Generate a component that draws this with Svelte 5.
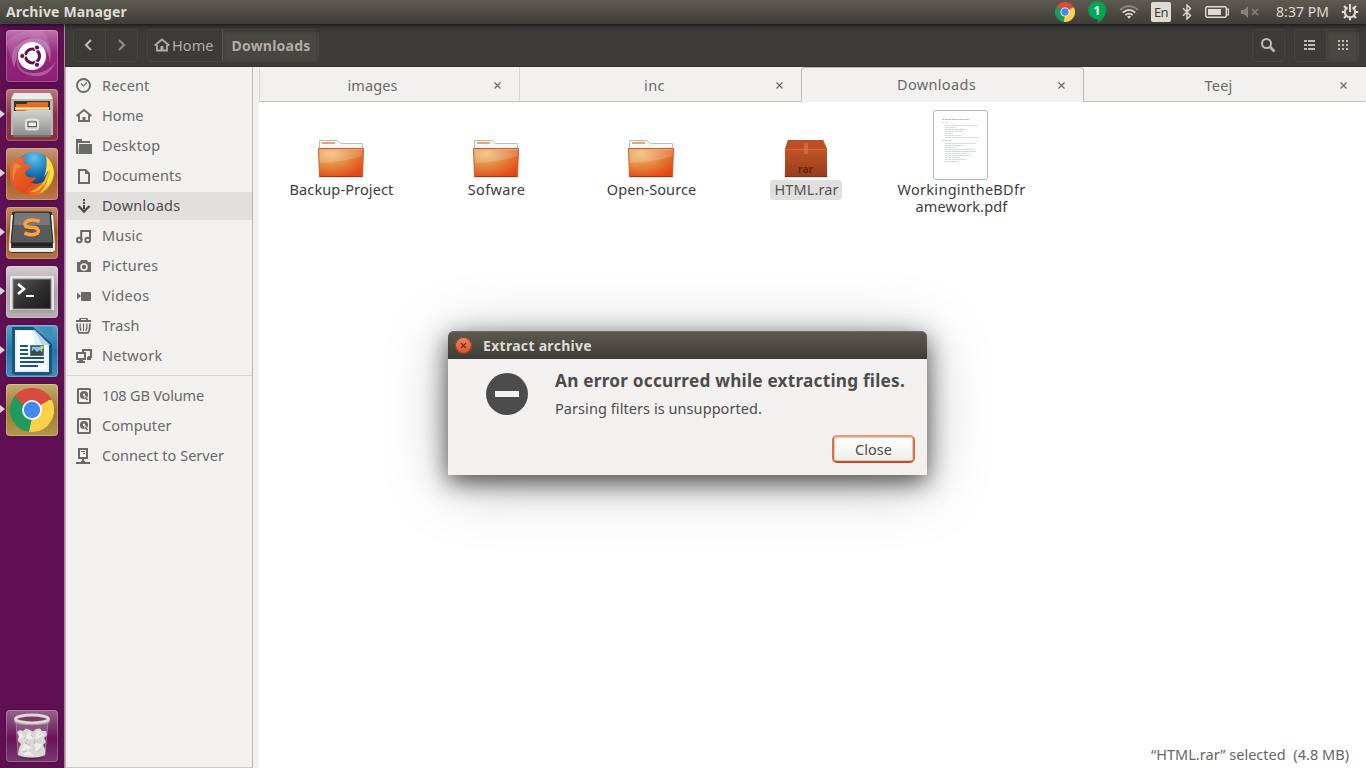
<script>
  // Spreads the letters of a label so that it takes up the given width.
  function track(node, width) {
    const range = document.createRange();
    range.selectNodeContents(node);
    const natural = range.getBoundingClientRect().width;
    const gap = (width - natural) / node.textContent.length;
    node.style.letterSpacing = gap.toFixed(3) + 'px';
  }

  const places = [
    ['recent', 'Recent', 47.5],
    ['home', 'Home', 41.5],
    ['desktop', 'Desktop', 58.5],
    ['documents', 'Documents', 79.5],
    ['downloads', 'Downloads', 78.5],
    ['music', 'Music', 40.5],
    ['pictures', 'Pictures', 56.5],
    ['videos', 'Videos', 47.5],
    ['trash', 'Trash', 37.5],
    ['network', 'Network', 60.5]
  ];
  const devices = [
    ['disk', '108 GB Volume', 102],
    ['disk', 'Computer', 69.5],
    ['server', 'Connect to Server', 122]
  ];
  const tabs = [
    { name: 'images', width: 50 },
    { name: 'inc', width: 21 },
    { name: 'Downloads', width: 79, active: true },
    { name: 'Teej', width: 28 }
  ];
  const files = [
    { kind: 'folder', lines: [['Backup-Project', 104]] },
    { kind: 'folder', lines: [['Sofware', 57.5]] },
    { kind: 'folder', lines: [['Open-Source', 89.5]] },
    { kind: 'rar', lines: [['HTML.rar', 64]], selected: true },
    { kind: 'pdf', lines: [['WorkingintheBDfr', 128], ['amework.pdf', 92]] }
  ];
  const apps = ['dash', 'cabinet', 'firefox', 'sublime', 'terminal', 'writer', 'chrome'];
  const pdfLines = [
    [9, 9, 27, 2], [9, 12, 6, 1], [12, 15, 32, 1], [12, 17, 11, 1], [12, 19, 20, 1], [12, 21, 17, 1], [12, 23, 8, 1],
    [12, 25, 17, 1], [12, 27, 35, 1], [9, 30, 10, 1], [12, 33, 31, 1], [12, 35, 18, 1], [12, 37, 11, 1],
    [12, 39, 29, 1], [12, 41, 31, 1], [12, 43, 22, 1], [12, 45, 26, 1], [12, 47, 15, 1], [12, 49, 20, 1], [12, 51, 14, 1]
  ];
</script>

{#snippet chromeLogo(size)}
  <svg width={size} height={size} viewBox="0 0 44 44">
    <path d="M22 22 2.9 11 A22 22 0 0 1 41.1 11Z" fill="#d84b3e" />
    <path d="M22 22 41.1 11 A22 22 0 0 1 22 44Z" fill="#fdd04a" />
    <path d="M22 22 22 44 A22 22 0 0 1 2.9 11Z" fill="#1e9a5d" />
    <path d="M22 12H41.5L40 9 22 8Z" fill="#d84b3e" />
    <path d="M30.7 27 22 44 19 43.8 22 30Z" fill="#fdd04a" />
    <path d="M13.3 27 3 11 5 8 14 18Z" fill="#1e9a5d" />
    <circle cx="22" cy="22" r="10" fill="#fff" />
    <circle cx="22" cy="22" r="8.2" fill="#4688f1" />
  </svg>
{/snippet}

{#snippet placeIcon(kind)}
  <svg class="place-icon" width="16" height="16" viewBox="0 0 16 16">
    {#if kind === 'recent'}
      <circle cx="7.5" cy="7.5" r="6.5" fill="none" stroke="currentColor" stroke-width="1.9" />
      <path d="M5 5.5 7.5 8 11 4.5" fill="none" stroke="currentColor" stroke-width="1.2" />
    {:else if kind === 'home'}
      <path d="M.5 8 8 2 15.500 8M3 7V13H13V7" fill="none" stroke="currentColor" stroke-width="1.9" />
      <path d="M6.500 9H9.500V13H6.500Z" fill="currentColor" />
    {:else if kind === 'desktop'}
      <path d="M0 1H6V3H14V5H2V16H0ZM3 6H16V16H2.500Z" fill="currentColor" />
    {:else if kind === 'documents'}
      <path d="M3 2H9.500L13 5.500V15H3Z" fill="none" stroke="currentColor" stroke-width="2" />
      <path d="M9 2V6H13Z" fill="currentColor" />
    {:else if kind === 'downloads'}
      <path d="M7 1H9V3H7ZM7 4H9V6H7ZM7 7H9V11H7Z" fill="currentColor" />
      <path d="M2.500 8 8 13.500 13.500 8" fill="none" stroke="currentColor" stroke-width="2.300" />
    {:else if kind === 'music'}
      <path d="M5.200 12V3H14V11" fill="none" stroke="currentColor" stroke-width="2" />
      <circle cx="3.300" cy="12" r="2.300" fill="none" stroke="currentColor" stroke-width="2" />
      <circle cx="11.700" cy="12" r="2.300" fill="none" stroke="currentColor" stroke-width="2" />
    {:else if kind === 'pictures'}
      <path d="M1 4H4L5 2H11L12 4H15V14H1Z" fill="currentColor" />
      <circle cx="8" cy="9" r="3" fill="none" stroke="#f2f1f0" stroke-width="1.600" />
    {:else if kind === 'videos'}
      <path d="M1 4.500 5 8 1 11.500ZM5.500 4H14Q15 4 15 5V12Q15 13 14 13H5.500Q5 13 5 12V5Q5 4 5.500 4Z" fill="currentColor" />
    {:else if kind === 'trash'}
      <path d="M0 2H3L3.500 0H11.500L12 2H15V4H0Z" fill="currentColor" />
      <path d="M5 1.500H10" stroke="#f2f1f0" />
      <path d="M1.200 5.500Q.8 12 3 14.900H12Q14.200 12 13.800 5.500" fill="none" stroke="currentColor" stroke-width="1.800" />
      <path d="M4.200 5.500Q3.600 10 5 13M7.500 5.500V13M10.800 5.500Q11.400 10 10 13" fill="none" stroke="currentColor" stroke-width="1.200" />
    {:else if kind === 'network'}
      <path d="M7 4V2H15V9H12M1 5H9V11H1Z" fill="none" stroke="currentColor" stroke-width="2" />
      <path d="M3 11H7V13H9V15H1V13H3ZM11 9H14V10H15V12H11Z" fill="currentColor" />
    {:else if kind === 'disk'}
      <rect x="2" y="1" width="12" height="14" rx=".8" fill="none" stroke="currentColor" stroke-width="2" />
      <circle cx="8" cy="7" r="4.100" fill="currentColor" />
      <path d="M7.500 9 9.500 7.500 13 12 11 13Z" fill="#f2f1f0" />
      <path d="M9 9 11.500 12" stroke="currentColor" stroke-width="1.600" />
      <circle cx="8" cy="6.800" r="1.200" fill="#f2f1f0" />
    {:else if kind === 'server'}
      <path d="M3 1H11V10H3Z" fill="none" stroke="currentColor" stroke-width="2" />
      <path d="M5 3H9V4H5ZM7 5H9V6H7ZM6 10H8V14H6ZM0 14H14V16H0ZM5 13H9V14H5Z" fill="currentColor" />
    {/if}
  </svg>
{/snippet}

<div class="screen">
  <header class="panel">
    <span class="title"><span use:track={121}>Archive Manager</span></span>
    <div class="indicators">
      <span class="ind chrome-tray">{@render chromeLogo(20)}</span>
      <span class="ind hangouts">
        <svg width="20" height="22" viewBox="0 0 20 22"><path d="M10 0A9.200 9.200 0 0 1 19.200 9.300C19.200 15 15 19 11 22V18.400A9.200 9.200 0 1 1 10 0Z" fill="#00a558" /></svg>
        <b>1</b>
      </span>
      <svg class="ind wifi" width="20" height="14" viewBox="0 0 20 14" fill="none" stroke-width="1.700">
        <path d="M1 4.800Q10-2.500 19 4.800" stroke="#8b8981" />
        <path d="M3.700 7.600Q10 2 16.300 7.600" stroke="#dfdbd2" />
        <path d="M6.300 10.200Q10 7 13.700 10.200" stroke="#dfdbd2" />
        <path d="M8 11.500Q10 10 12 11.500L10 13.800Z" fill="#dfdbd2" stroke="none" />
      </svg>
      <span class="ind keyboard"><span use:track={14}>En</span></span>
      <svg class="ind bluetooth" width="10" height="16" viewBox="0 0 10 16"><path d="M1 4.300 8.500 11.500 5 15V1L8.500 4.500 1 11.700" fill="none" stroke="#dfdbd2" stroke-width="1.400" /></svg>
      <svg class="ind battery" width="25" height="12" viewBox="0 0 25 12">
        <rect x=".7" y=".7" width="20.600" height="10.600" rx="1.500" fill="none" stroke="#dfdbd2" stroke-width="1.400" />
        <path d="M3 3H16V9H3Z" fill="#dfdbd2" /><path d="M22 3H23.400V9H22" fill="none" stroke="#dfdbd2" stroke-width="1.200" />
      </svg>
      <svg class="ind volume" width="18" height="12" viewBox="0 0 18 12"><path d="M0 4H3L7 0V12L3 8H0Z" fill="#85837b" /><path d="M11 3 17 9M17 3 11 9" stroke="#85837b" stroke-width="1.600" /></svg>
      <span class="ind clock"><span use:track={53}>8:37 PM</span></span>
      <svg class="ind gear" width="18" height="18" viewBox="0 0 18 18" stroke="#dfdbd2" fill="none">
        <path d="M6.500 4.500A5.200 5.200 0 1 0 11.500 4.500" stroke-width="2" />
        <path d="M9 1V9" stroke-width="2" />
        <path d="M3.600 9H.8M14.400 9H17.200M5.100 12.900 3 15M12.900 12.900 15 15M9 14.400V17.200M5 5 3 3M13 5 15 3" stroke-width="2.200" />
      </svg>
    </div>
  </header>

  <div class="desktop">
    <nav class="launcher">
      {#each apps as app}
        <div class="app {app}" class:running={app !== 'dash'}>
          {#if app === 'dash'}
            <svg width="52" height="52" viewBox="0 0 52 52">
              <path d="M8 38Q0 14 26 8Q48 8 44 33Q42 14 26 12Q12 13 11 27Z" fill="#dcb3d3" opacity=".45" />
              <path d="M12 26Q10 44 30 43Q43 42 50 31Q42 52 20 44Q8 39 12 26Z" fill="#dcb3d3" opacity=".4" />
              <path d="M0 12Q10 0 32 0Q44 2 45 26Q40 7 22 7Q7 10 7 34Z" fill="#e6c1df" opacity=".18" />
              <circle cx="26" cy="26" r="14" fill="#fff" />
              <circle cx="26.500" cy="26" r="7" fill="none" stroke="#651054" stroke-width="3" stroke-dasharray="13.100 1.560" stroke-dashoffset="6.500" />
              <g fill="#651054" stroke="#fff" stroke-width="1"><circle cx="16.300" cy="26" r="2.600" /><circle cx="31" cy="17.500" r="2.600" /><circle cx="31" cy="34.800" r="2.600" /></g>
            </svg>
          {:else if app === 'cabinet'}
            <svg width="52" height="52" viewBox="0 0 52 52">
              <defs><linearGradient id="cab" x2="0" y2="1"><stop stop-color="#d3d3d1" /><stop offset="1" stop-color="#8c8c8a" /></linearGradient></defs>
              <path d="M8 4H44L47 12V46H5V12Z" fill="#b9b9b7" /><path d="M8 4H44L47 10H5Z" fill="#ecece9" />
              <path d="M8 12H44V24H8Z" fill="#38322e" />
              <path d="M10 15H20L22 13H42V23H10Z" fill="#e06d20" /><path d="M9 18H43V21H9Z" fill="#f8b36b" /><path d="M10 19H43V20H10Z" fill="#fff3df" />
              <path d="M7 22H19L21 21H45V47H7Z" fill="url(#cab)" /><path d="M7 46H45V48H7Z" fill="#73706d" />
              <rect x="20" y="30.500" width="12" height="10" rx="2.500" fill="#bdbdbb" stroke="#e5e5e3" stroke-width="2" />
              <rect x="22" y="33" width="8.500" height="4.500" fill="#f3f3f1" stroke="#555" />
            </svg>
          {:else if app === 'firefox'}
            <svg width="52" height="52" viewBox="0 0 52 52">
              <defs>
                <radialGradient id="globe" cx=".5" cy=".15" r=".8"><stop stop-color="#63c3ea" /><stop offset=".55" stop-color="#1771b4" /><stop offset="1" stop-color="#11316e" /></radialGradient>
                <linearGradient id="fox" x2="1" y2="1"><stop stop-color="#ee7331" /><stop offset=".6" stop-color="#e24b1e" /><stop offset="1" stop-color="#f6a02a" /></linearGradient>
              </defs>
              <circle cx="28" cy="23" r="19" fill="url(#globe)" />
              <path d="M6 12 9 15Q13 8 21 9Q17 12 18 16L25 17Q26 20 20 23L19 26Q22 31 30 29Q29 34 24 34Q33 39 41 30Q46 21 42 12Q51 20 47 32Q41 47.500 25 47.500Q4 45 4 26Q4 18 6 12Z" fill="url(#fox)" />
              <path d="M40 8Q48 15 48 26Q46 39 34 45Q44 34 42 23L38 29Q42 18 40 8Z" fill="#ffdf3d" />
              <path d="M44 20Q45 32 33 42Q28 45 24 44Q38 38 40 28Z" fill="#f9b52c" />
              <path d="M9 15Q4 24 8 34Q7 22 16 18Z" fill="#f59a54" opacity=".6" />
            </svg>
          {:else if app === 'sublime'}
            <svg width="52" height="52" viewBox="0 0 52 52">
              <path d="M6 5H46L48 39V43Q48 46 45 46H7Q4 46 4 43V39Z" fill="#353535" />
              <path d="M6 8 4 38V42Q4 44 7 44H45Q48 44 48 42V38L46 8" fill="none" stroke="#f0efed" stroke-width="2" />
              <path d="M8 5H44L47 36H5Z" fill="#5a5a5a" stroke="#262626" /><path d="M9 6H43L44 18H8Z" fill="#898989" opacity=".65" />
              <path d="M6 36H46V39H6Z" fill="#242424" /><path d="M5 41H47V45H5Z" fill="#e9e9e7" />
              <path d="M33.500 14.500Q28 12 22.500 13.500Q17 16 20 19.500Q23 20.500 29 20.500Q34 22.500 31.500 26Q27 29.500 18.500 26" fill="none" stroke="#ffa13d" stroke-width="3.600" />
            </svg>
          {:else if app === 'terminal'}
            <svg width="52" height="52" viewBox="0 0 52 52">
              <defs><linearGradient id="term" x2="1" y2="1"><stop stop-color="#555" /><stop offset=".6" stop-color="#2b2b2b" /><stop offset="1" stop-color="#1b1b1b" /></linearGradient></defs>
              <rect x="4" y="10" width="44" height="37" rx="1" fill="#e7e6e4" /><path d="M4 44H48V47H4Z" fill="#a5a3a4" />
              <rect x="7" y="13" width="38" height="30" fill="url(#term)" stroke="#8c8b89" />
              <path d="M12 18 18 23 12 28" fill="none" stroke="#fff" stroke-width="2.600" /><path d="M20 30H28" stroke="#fff" stroke-width="2" />
            </svg>
          {:else if app === 'writer'}
            <svg width="52" height="52" viewBox="0 0 52 52">
              <path d="M6 2H27L46 19V47Q46 50 43 50H9Q6 50 6 47Z" fill="#14567f" />
              <path d="M32 2H46V16ZM46 2Q48 11 46 17Z" fill="#3f8eb9" />
              <path d="M9 5H28L43 20V47H9Z" fill="#e3f0f6" /><path d="M11 6H28V19H41V45H11Z" fill="#fbfdfe" /><path d="M28 4 44 20H36Z" fill="#b3d7e8" />
              <path d="M14 21H22M14 25H22M14 29H22M14 33H38M14 37H38M14 41H32" stroke="#175781" stroke-width="2" />
              <rect x="25" y="21" width="12" height="9" fill="#8cc5e2" stroke="#175781" stroke-width="1.600" /><path d="M25 30V27L28 24 31 27 34 25 37 29V30Z" fill="#424a43" /><circle cx="36" cy="22.500" r="1.800" fill="#f6c639" />
            </svg>
          {:else}
            {@render chromeLogo(44)}
          {/if}
        </div>
      {/each}
      <div class="app trash">
        <svg width="52" height="52" viewBox="0 0 52 52">
          <path d="M10 12H42L39 46Q26 50 12 46Z" fill="#fff" opacity=".16" />
          <path d="M10 12 12 45M42 12 39 45" stroke="#c7b8c4" opacity=".5" />
          <path d="M11 22 14 20 17 21 20 18.500 24 20 27 21.500 30 19 34 18.500 36 21 40 21 41 25 38 28 40 32 37 35 39 39V45Q34 47.500 26 47.500Q18 47.500 12 45L13 38 15 34 12 31 13 27Z" fill="#d9d8d5" />
          <path d="M14 22 18 27 12 30ZM23 20 27 29 19 30ZM31 20 38 25 29 30ZM18 33 26 38 15 41ZM28 32 37 35 30 42ZM22 40 28 46 17 45Z" fill="#ecece8" />
          <path d="M18 28 22 30 19 33 24 35M29 29 28 34 32 31M31 42 35 39M17 42 21 41M25 25 27 27M33 25 35 24" fill="none" stroke="#b9b8b4" stroke-width=".8" />
          <ellipse cx="26" cy="9" rx="16.500" ry="4" fill="#7a3970" stroke="#d9d9d5" stroke-width="3" />
          <path d="M8 9Q9 14 26 14Q43 14 44 9V12Q41 15 26 15Q11 15 8 12Z" fill="#aaa9a4" /><path d="M11 47Q26 52 41 47Q27 49 11 47Z" fill="#2d2230" opacity=".6" />
        </svg>
      </div>
    </nav>

    <main class="window">
      <div class="toolbar">
        <div class="group">
          <span class="tool"><svg width="10" height="14" viewBox="0 0 10 14"><path d="M7 2 2 7 7 12" fill="none" stroke="#bbb9b1" stroke-width="2.200" /></svg></span>
          <span class="tool"><svg width="10" height="14" viewBox="0 0 10 14"><path d="M2 2 7 7 2 12" fill="none" stroke="#8e8c86" stroke-width="2.200" /></svg></span>
        </div>
        <div class="group path">
          <span class="crumb home-crumb">
            <svg width="16" height="14" viewBox="0 0 16 14"><path d="M.7 7.500 8 1.500 15.300 7.500M3 7V12.500H13V7" fill="none" stroke="#aeb0a3" stroke-width="1.800" /><path d="M6.500 8H9.500V12H6.500Z" fill="#aeb0a3" /></svg>
            <span use:track={41.5}>Home</span>
          </span>
          <span class="crumb on"><b use:track={79}>Downloads</b></span>
        </div>
        <div class="grow"></div>
        <div class="group search"><span class="tool"><svg width="16" height="16" viewBox="0 0 16 16"><circle cx="6.500" cy="6.500" r="4.500" fill="none" stroke="#bfbdb4" stroke-width="2" /><path d="M10 10 14.500 14.500" stroke="#bfbdb4" stroke-width="2.600" /></svg></span></div>
        <div class="group views">
          <span class="tool"><svg width="12" height="10" viewBox="0 0 12 10"><path d="M0 0H3V2H0ZM4 0H11V2H4ZM0 4H3V6H0ZM4 4H11V6H4ZM0 8H3V10H0ZM4 8H11V10H4Z" fill="#bfbdb4" /></svg></span>
          <span class="tool on"><svg width="10" height="10" viewBox="0 0 10 10"><path d="M0 0H2V2H0ZM4 0H6V2H4ZM8 0H10V2H8ZM0 4H2V6H0ZM4 4H6V6H4ZM8 4H10V6H8ZM0 8H2V10H0ZM4 8H6V10H4ZM8 8H10V10H8Z" fill="#bfbdb4" /></svg></span>
        </div>
      </div>

      <div class="body">
        <aside class="sidebar">
          {#each places as [icon, name, width]}
            <div class="place" class:current={name === 'Downloads'}>{@render placeIcon(icon)}<span use:track={width}>{name}</span></div>
          {/each}
          <hr />
          {#each devices as [icon, name, width]}
            <div class="place">{@render placeIcon(icon)}<span use:track={width}>{name}</span></div>
          {/each}
        </aside>

        <section class="content">
          <div class="tabs">
            {#each tabs as tab}
              <div class="tab" class:active={tab.active}>
                <span class="tab-name"><span use:track={tab.width}>{tab.name}</span></span>
                <svg width="7" height="7" viewBox="0 0 7 7"><path d="M.5.5 6.500 6.500M6.500.5.5 6.500" stroke="#666664" stroke-width="1.100" /></svg>
              </div>
            {/each}
          </div>
          <div class="file-grid">
            {#each files as file, i}
              <div class="file" class:selected={file.selected}>
                <div class="thumb">
                  {#if file.kind === 'folder'}
                    <svg width="48" height="41" viewBox="0 0 48 41">
                      <defs>
                        <radialGradient id="fold{i}" cx=".28" cy=".2" r=".95"><stop stop-color="#f1bd73" /><stop offset=".5" stop-color="#e2833b" /><stop offset=".9" stop-color="#e84b16" /><stop offset="1" stop-color="#dc4816" /></radialGradient>
                      </defs>
                      <path d="M1 37H47V39H1Z" fill="#000" opacity=".12" />
                      <path d="M2.500 10V1.500H20L23.500 4.500H45.500V10Z" fill="#f7f7f6" stroke="#bcbcbb" />
                      <rect x="5" y="3" width="13" height="2" fill="#efa06c" />
                      <path d="M1.500 9.500H46.500L45.500 37.500H2.500Z" fill="url(#fold{i})" stroke="#c9602f" />
                      <path d="M2 10H46L45.700 17Q27 23 2.500 24Z" fill="#fff" opacity=".18" /><path d="M2 10.500H46" stroke="#f0ad7b" opacity=".8" />
                      <path d="M3 37.500H45" stroke="#a93510" />
                    </svg>
                  {:else if file.kind === 'rar'}
                    <div class="rar">
                      <svg width="46" height="41" viewBox="0 0 46 41">
                        <defs><linearGradient id="box" x2="0" y2="1"><stop stop-color="#d05b29" /><stop offset="1" stop-color="#963d1b" /></linearGradient></defs>
                        <path d="M1 32H45V39H1Z" fill="#000" opacity=".12" /><path d="M5 1H40L44 10V38H2V10Z" fill="url(#box)" />
                        <path d="M5 1H40L44 10H2Z" fill="#bd4f22" /><path d="M2 10.500H44" stroke="#d0683a" /><path d="M21 4H25V15H21Z" fill="#e07c51" opacity=".6" /><path d="M2 37.500H44" stroke="#803113" />
                      </svg>
                      <span use:track={15}>rar</span>
                    </div>
                  {:else}
                    <svg width="55" height="70" viewBox="0 0 55 70">
                      <rect x=".5" y=".5" width="54" height="69" rx="2.500" fill="#fff" stroke="#b5b5b1" />
                      {#each pdfLines as [x, y, w, h], n}
                        <path d="M{x} {y + .5}H{x + w}" stroke={n % 5 === 4 ? '#9bb9ce' : '#b9bec3'} stroke-width={h * .6} stroke-dasharray="2 .5 4 .5" />
                      {/each}
                    </svg>
                  {/if}
                </div>
                <div class="caption">
                  {#each file.lines as [text, width]}<div><span use:track={width}>{text}</span></div>{/each}
                </div>
              </div>
            {/each}
          </div>
          <div class="status"><span use:track={198}>“HTML.rar” selected&nbsp; (4.8 MB)</span></div>
        </section>
      </div>
    </main>
  </div>

  <div class="dialog">
    <div class="dialog-title">
      <span class="close-dot"><svg width="7" height="7" viewBox="0 0 8 8"><path d="M1.200 1.200 6.800 6.800M6.800 1.200 1.200 6.800" stroke="#542d1f" stroke-width="1.300" /></svg></span>
      <b use:track={109}>Extract archive</b>
    </div>
    <div class="message">
      <div class="stop"><i></i></div>
      <div class="words">
        <div class="head"><b use:track={350}>An error occurred while extracting files.</b></div>
        <div class="detail"><span use:track={207}>Parsing filters is unsupported.</span></div>
      </div>
    </div>
    <button><span use:track={37}>Close</span></button>
  </div>
</div>

<style>
  :global(body) { margin: 0; overflow: hidden; }
  .screen { position: relative; width: 1366px; height: 768px; display: flex; flex-direction: column; overflow: hidden; font: 14.5px/20px "Noto Sans", "Open Sans", sans-serif; color: #3c3c3c; white-space: nowrap; }
  svg { display: block; flex: none; }
  .panel { height: 24px; flex: none; display: flex; justify-content: space-between; background: linear-gradient(#5d5a50, #3e3d38); box-shadow: 0 1px 5px rgba(0, 0, 0, .75); z-index: 2; color: #dfdbd2; }
  .title { padding-left: 6px; font-size: 14px; font-weight: 700; line-height: 23px; }
  .indicators { display: flex; align-items: center; padding-right: 7px; }
  .chrome-tray { margin-right: 12px; }
  .hangouts { display: grid; margin-right: 12px; }
  .hangouts > * { grid-area: 1 / 1; }
  .hangouts b { color: #fff; font-size: 12px; line-height: 19px; text-align: center; }
  .wifi { margin-right: 12px; }
  .keyboard { width: 20px; height: 20px; margin-right: 11px; border-radius: 2px; background: #dfdbd2; color: #3c3b37; font-size: 13px; text-align: center; }
  .bluetooth { margin-right: 13px; }
  .battery { margin-right: 11px; }
  .volume { margin-right: 17px; }
  .clock { width: 54px; margin-right: 11px; font-size: 14px; }
  .desktop { flex: 1; display: flex; min-height: 0; }
  .launcher { width: 65px; flex: none; padding: 6px 0; box-sizing: border-box; display: flex; flex-direction: column; gap: 7px; background: #601052; border-right: 1px solid #a18a9d; }
  .app { position: relative; width: 52px; height: 52px; margin-left: 6px; display: grid; place-items: center; border-radius: 4px; box-shadow: inset 0 0 0 1px rgba(255, 255, 255, .24), 0 0 3px rgba(0, 0, 0, .35); }
  .running::before { content: ""; position: absolute; left: -6px; top: 21px; border: solid transparent; border-width: 4.500px 0 4.500px 5px; border-left-color: #d9d3d8; }
  .dash { background: linear-gradient(#bd72ad, #94277d 45%, #8d1e75); }
  .cabinet { background: linear-gradient(#bb797d, #8a2f42 50%, #873345); }
  .firefox { background: linear-gradient(#c69974, #a65b2c 50%, #b87946); }
  .sublime { background: linear-gradient(#c38c64, #9f571e 50%, #b2713e); }
  .terminal { background: linear-gradient(#d4ccd2, #aaa0a8 50%, #b7afb5); }
  .writer { background: linear-gradient(#5a9fc6, #2776a9 50%, #438bb7); }
  .chrome { background: linear-gradient(#c5ac70, #9b7d2e 50%, #b49649); }
  .app.trash { margin-top: auto; background: linear-gradient(#99628f, #78306b 35%, #671255 55%, #783b6d); }
  .window { flex: 1; min-width: 0; display: flex; flex-direction: column; }
  .toolbar { height: 43px; flex: none; display: flex; align-items: center; padding: 0 7px 0 8px; background: #3c3b37; box-sizing: border-box; border-bottom: 1px solid #32312e; color: #b0aea5; }
  .group { display: flex; height: 33px; box-sizing: border-box; border: 1px solid #474641; border-radius: 4px; }
  .tool { width: 31px; display: grid; place-items: center; box-sizing: border-box; padding-right: 2px; }
  .tool + .tool { width: 32px; padding-right: 0; border-left: 1px solid #474641; }
  .tool.on, .crumb.on { background: #484740; box-shadow: inset 0 1px 3px rgba(0, 0, 0, .25); }
  .path { margin-left: 9px; width: 172px; }
  .crumb { display: flex; align-items: center; height: 31px; }
  .home-crumb { width: 74px; gap: 2px; padding-left: 6px; box-sizing: border-box; }
  .crumb.on { flex: 1; justify-content: center; border-left: 1px solid #5b5950; }
  .crumb b { font-size: 14px; padding: 1px 0 0 1px; }
  .grow { flex: 1; }
  .search { margin-right: 9px; }
  .body { flex: 1; display: flex; min-height: 0; background: #f2f1f0; }
  .sidebar { width: 188px; flex: none; box-sizing: border-box; padding-top: 5px; display: flex; flex-direction: column; gap: 2px; border: 1px solid #b8b6b2; border-top: 0; border-bottom-color: #cac9c6; color: #696966; }
  .place { height: 28px; flex: none; display: flex; align-items: center; gap: 10px; padding-left: 10px; }
  .place span { padding-bottom: 2px; }
  .place.current { background: #e1e0df; color: #4b4b4b; }
  .sidebar hr { width: 100%; height: 1px; flex: none; margin: 3px 0 4px; border: 0; background: #d9d8d6; }
  .content { flex: 1; min-width: 0; margin-left: 6px; display: flex; flex-direction: column; background: #fff; }
  .tabs { height: 35px; flex: none; display: grid; grid-template-columns: 260px repeat(3, 282px); overflow: hidden; background: #f2f1f0; color: #696966; }
  .tab { display: flex; align-items: center; box-sizing: border-box; border-left: 1px solid #d7d6d3; border-bottom: 1px solid #c5c2bc; padding: 3px 18px 0 29px; }
  .tab:first-child { padding-left: 7px; }
  .tab-name { flex: 1; margin-right: 16px; padding-bottom: 2px; text-align: center; }
  .tab.active { border: 1px solid #bdbbb7; border-bottom: 0; border-radius: 4px 4px 0 0; padding-top: 0; width: 283px; }
  .tab.active + .tab { border-left: 0; padding-left: 30px; }
  .file-grid { flex: 1; display: grid; grid-template-columns: repeat(5, 155px); align-content: start; padding: 8px 0 0 4px; }
  .file { display: flex; flex-direction: column; align-items: center; }
  .thumb { height: 70px; display: flex; align-items: flex-end; }
  .caption { margin-top: 1px; padding: 0 3px 1px 5px; line-height: 17px; text-align: center; }
  .caption span { display: inline-block; height: 17px; vertical-align: top; }
  .selected .caption { background: #e0dfde; border-radius: 4px; color: #555; padding-top: 1px; padding-bottom: 2px; margin-top: 0; }
  .rar { display: grid; justify-items: center; }
  .rar > * { grid-area: 1 / 1; }
  .rar span { align-self: end; margin-bottom: 4px; font: 600 11px/14px "Noto Sans", sans-serif; color: #5f250e; }
  .status { flex: none; height: 27px; padding-right: 17px; text-align: right; line-height: 26px; color: #666; }
  .dialog { position: absolute; z-index: 3; left: 448px; top: 331px; width: 479px; height: 144px; display: flex; flex-direction: column; border-radius: 6px 6px 0 0; background: #f2f1f0; box-shadow: 0 7px 24px rgba(0, 0, 0, .65), 0 8px 64px rgba(0, 0, 0, .25); color: #4c4c4c; }
  .dialog-title { height: 28px; flex: none; display: flex; align-items: center; gap: 11px; padding-left: 7px; border-radius: 6px 6px 0 0; background: linear-gradient(#5d5a50, #3d3c37); box-shadow: inset 0 1px #706d62; color: #dfdbd2; font-size: 14px; }
  .dialog-title b { padding-top: 1px; }
  .close-dot { width: 17px; height: 17px; display: grid; place-items: center; border-radius: 50%; background: linear-gradient(#f38564, #df5022); box-shadow: inset 0 0 0 1px #7c3f2b; }
  .message { display: flex; padding-left: 38px; }
  .stop { width: 42px; height: 42px; margin-top: 14px; display: grid; place-items: center; border-radius: 50%; background: #4c4c4c; }
  .stop i { width: 24px; height: 6px; background: #f2f1f0; }
  .words { margin-left: 27px; }
  .head { margin-top: 11px; height: 22px; font-size: 17.200px; line-height: 22px; }
  .detail { margin-top: 6px; height: 21px; }
  button { width: 83px; height: 28px; margin: 16px 12px 0 auto; padding: 0; box-sizing: border-box; border: 2px solid #d96f45; border-color: #ed9878 #d87049 #bd5127; border-radius: 5px; background: linear-gradient(#fff, #efeeed); box-shadow: inset 0 0 0 1px #f0c6b5; color: #4c4c4c; font: 14.500px/22px "Noto Sans", sans-serif; }
</style>
